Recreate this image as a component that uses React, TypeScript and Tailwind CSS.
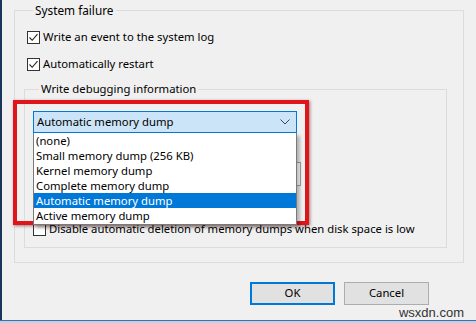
import React from "react";

const font = { fontFamily: '"Noto Sans", "Segoe UI", sans-serif' };

function Check({ checked }: { checked?: boolean }) {
  return (
    <span className="inline-flex w-[13px] h-[13px] border border-[#333333] bg-white items-center justify-center shrink-0">
      {checked && (
        <svg width="11" height="11" viewBox="0 0 11 11">
          <polyline points="1.5,5.5 4.2,8.3 9.5,2.2" fill="none" stroke="#222" strokeWidth="1.1" />
        </svg>
      )}
    </span>
  );
}

export default function App() {
  const items = [
    "(none)",
    "Small memory dump (256 KB)",
    "Kernel memory dump",
    "Complete memory dump",
    "Automatic memory dump",
    "Active memory dump",
  ];
  return (
    <div
      className="relative w-[476px] h-[323px] bg-[#f0f0f0] text-[11.3px] text-black overflow-hidden flex flex-col"
      style={font}
    >
      <div className="flex-1 flex border-l-2 border-[#1b3558]">
        <div className="flex-1 flex flex-col pl-[12px]">
          <fieldset className="mt-[3px] w-[450px] h-[260px] border border-[#dcdcdc] px-[12px]">
            <legend className="ml-[6px] px-[2px] leading-[14px] text-[11.8px]">System failure</legend>
            <div className="flex items-center gap-[3px] mt-[13px] h-[14px]">
              <Check checked />
              <span>Write an event to the system log</span>
            </div>
            <div className="flex items-center gap-[3px] mt-[13px] h-[14px]">
              <Check checked />
              <span>Automatically restart</span>
            </div>
            <fieldset className="relative mt-[11px] -ml-[3px] w-[423px] h-[166px] border border-[#dcdcdc] px-[8px]">
              <legend className="ml-[6px] px-[2px] leading-[14px]">Write debugging information</legend>
              <div className="relative mt-[15px] w-[264px]">
                <div className="h-[22px] border border-[#0078d7] bg-[#cce4f7] flex items-center pl-[3px] pr-[6px]">
                  <span className="flex-1">Automatic memory dump</span>
                  <svg width="10" height="6" viewBox="0 0 10 6">
                    <polyline points="0.5,0.5 5,5 9.5,0.5" fill="none" stroke="#444" strokeWidth="1" />
                  </svg>
                </div>
                <div className="absolute z-10 left-0 top-[22px] w-[264px] h-[92px] bg-white border border-[#7a7a7a] border-t-0 shadow-[3px_3px_3px_rgba(0,0,0,0.25)] flex flex-col overflow-hidden">
                  {items.map((t, i) => (
                    <div
                      key={t}
                      className={
                        "h-[15px] leading-[15px] pl-[2px] shrink-0 " +
                        (i === 4 ? "bg-[#0078d7] text-white" : "")
                      }
                    >
                      {t}
                    </div>
                  ))}
                </div>
              </div>
              <div className="mt-[29px] flex justify-start">
                <div className="ml-[180px] w-[88px] h-[24px] border border-[#a0a0a0] bg-white" />
              </div>
              <div className="mt-[36px] flex items-center gap-[3px] h-[14px]">
                <Check />
                <span>Disable automatic deletion of memory dumps when disk space is low</span>
              </div>
            </fieldset>
          </fieldset>
          <div className="flex gap-[9px] ml-[236px] mt-[19px]">
            <button className="w-[85px] h-[23px] border-2 border-[#0078d7] bg-[#e1e1e1]">OK</button>
            <button className="w-[85px] h-[23px] border border-[#adadad] bg-[#e1e1e1]">Cancel</button>
          </div>
          <div className="flex justify-end pr-[12px] mt-[1px]">
            <span className="text-[13px] leading-[14px] text-[#333]" style={{ fontFamily: '"Liberation Sans", Arial, sans-serif' }}>
              wsxdn.com
            </span>
          </div>
        </div>
      </div>
      <div className="h-[3px] bg-[#bcd2e8] border-t border-[#3d6fa8]" />
      <div className="absolute left-[13px] top-[100px] w-[296px] h-[125px] border-[4px] border-[#e0141b] shadow-[1px_1px_3px_rgba(80,0,0,0.5)] pointer-events-none" />
    </div>
  );
}
